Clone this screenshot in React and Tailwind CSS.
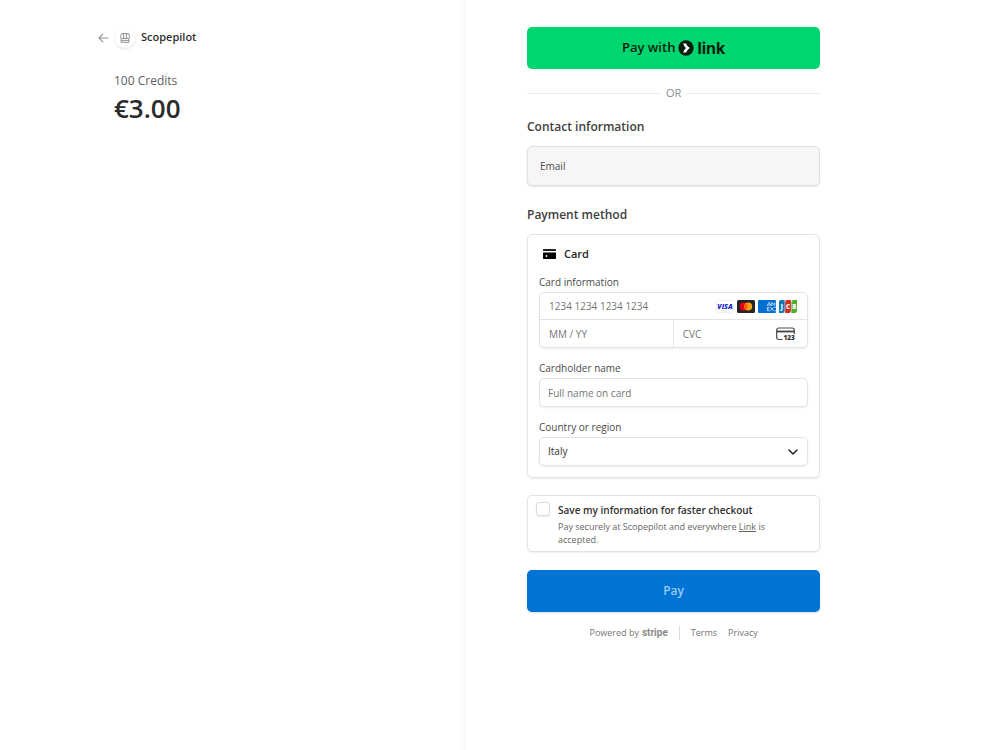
import React from "react";

const field =
  "block h-[29px] w-full rounded-[5px] border border-[#e3e3e3] bg-white px-2 text-[10px] text-[#303030] shadow-[0_1px_2px_rgba(0,0,0,0.07)] outline-none placeholder:text-[#757575]";
const label = "mt-[13px] mb-[3px] block text-[10px] leading-[14px] font-medium text-[#4a4a4a]";

function ArrowLeft() {
  return (
    <svg viewBox="0 0 11 10" className="h-[10px] w-[11px]" fill="none" stroke="#959595" strokeWidth="1.1" strokeLinecap="round" strokeLinejoin="round">
      <path d="M10 5H1.2M4.8 1.2L1 5l3.8 3.8" />
    </svg>
  );
}

function Store() {
  return (
    <svg viewBox="0 0 10 10" className="size-[10px]" fill="none" stroke="#858585" strokeWidth="0.9" strokeLinejoin="round">
      <path d="M1.5 0.6h7l1 3v0.6a1.2 1.2 0 0 1-1.2 1.2H1.7A1.2 1.2 0 0 1 0.5 4.2V3.6z" />
      <path d="M3.6 0.6v4.6M6.4 0.6v4.6M1.1 5.6v3.7h7.8V5.6M1.1 7.4h7.8" />
    </svg>
  );
}

function LinkMark() {
  return (
    <svg viewBox="0 0 16 16" className="size-4">
      <circle cx="8" cy="8" r="7.7" fill="#011e0f" />
      <path d="M5.2 3.4h3c.6 2 2 3.700 4 4.600-2 .9-3.400 2.600-4 4.600h-3c.5-1.900 1.500-3.500 2.900-4.600-1.400-1.100-2.400-2.700-2.900-4.600z" fill="#fff" />
    </svg>
  );
}

function CardIcon() {
  return (
    <svg viewBox="0 0 13 10" className="h-[10px] w-[13px]">
      <path d="M0.7 0h11.6q.7 0 .7.7V2H0V.7Q0 0 .7 0z" fill="#222" />
      <path d="M0 3.5h13v5.7q0 .8-.8.8H.8Q0 10 0 9.2z" fill="#000" />
      <circle cx="3.5" cy="7" r="0.9" fill="#fff" />
    </svg>
  );
}

function Visa() {
  return (
    <svg viewBox="0 0 18 13" className="h-[13px] w-[18px]" role="img" aria-label="Visa">
      <rect x="0.5" y="0.5" width="17" height="12" rx="1" fill="#fff" stroke="#f0f0f0" />
      <text x="9" y="9" textAnchor="middle" fontFamily="Open Sans, sans-serif" fontSize="7" fontWeight="800" fontStyle="italic" fill="#1a2bc8">VISA</text>
    </svg>
  );
}

function Mastercard() {
  return (
    <svg viewBox="0 0 18 13" className="h-[13px] w-[18px]" role="img" aria-label="Mastercard">
      <rect width="18" height="13" rx="1.5" fill="#252525" />
      <circle cx="6.8" cy="6.5" r="4" fill="#eb001b" />
      <circle cx="11.2" cy="6.5" r="4" fill="#f79e1b" />
      <path d="M9 3.16a4 4 0 0 1 0 6.68a4 4 0 0 1 0-6.68z" fill="#ff5f00" />
    </svg>
  );
}

function Amex() {
  return (
    <svg viewBox="0 0 18 13" className="h-[13px] w-[18px]" role="img" aria-label="American Express">
      <rect width="18" height="13" rx="1" fill="#016fd0" />
      <path d="M9.2 6l1.5-3.5h1L13 6M10 4.9h2.4M13.8 6V2.6l1.5 2 1.5-2V6" fill="none" stroke="#d6e9fa" strokeWidth="0.8" />
      <path d="M11.6 7.3H9.4v3.5h2.2M9.4 9h2M12.5 7.2l3.2 3.7M15.7 7.2l-3.2 3.7M16.3 7.3H18M16.3 10.8H18" fill="none" stroke="#d6e9fa" strokeWidth="0.8" />
    </svg>
  );
}

function Jcb() {
  const font = { fontFamily: "Open Sans, sans-serif", fontSize: "6", fontWeight: "800", fill: "#fff", textAnchor: "middle" };
  return (
    <svg viewBox="0 0 18 13" className="h-[13px] w-[18px]" role="img" aria-label="JCB">
      <path d="M2 0h3.7v11q0 2-2 2H0V2q0-2 2-2z" fill="#0f7ab8" />
      <path d="M8.2 0h3.7v11q0 2-2 2H6.2V2q0-2 2-2z" fill="#d9291c" />
      <path d="M14.4 0h3.6v11q0 2-2 2h-3.6V2q0-2 2-2z" fill="#4fae2c" />
      <text x="2.9" y="8.7" {...font}>J</text>
      <text x="9" y="8.7" {...font}>C</text>
      <text x="15.2" y="8.7" {...font}>B</text>
    </svg>
  );
}

function CvcIcon() {
  return (
    <svg viewBox="0 0 19 14" className="h-[14px] w-[19px]">
      <path d="M6.5 12.5H2.6A1.9 1.9 0 0 1 .7 10.6V2.9A1.9 1.9 0 0 1 2.6 1h13.8a1.9 1.9 0 0 1 1.9 1.9v4.3" fill="none" stroke="#4a4a4a" strokeWidth="1.2" />
      <path d="M.7 3.6h17.6v1.8H.7z" fill="#444" />
      <text x="13.2" y="13.3" textAnchor="middle" fontFamily="Open Sans, sans-serif" fontSize="6.5" fontWeight="800" fill="#333">123</text>
    </svg>
  );
}

function Chevron() {
  return (
    <svg viewBox="0 0 10 6" className="pointer-events-none col-start-1 row-start-1 mr-[10px] h-[6px] w-[10px] self-center justify-self-end" fill="none" stroke="#1f1f1f" strokeWidth="1.5" strokeLinecap="round" strokeLinejoin="round">
      <path d="M1 1l4 4 4-4" />
    </svg>
  );
}

function Summary() {
  return (
    <section className="w-[46.6%] shrink-0 bg-gradient-to-l from-[#f8f8f8] to-white to-[7px] pt-[27px] pr-[62px] pl-[98px]">
      <header className="flex h-[21px] items-center">
        <a href="#back" aria-label="Back"><ArrowLeft /></a>
        <span className="ml-1.5 flex size-5 items-center justify-center rounded-full bg-white shadow-[0_1px_3px_rgba(0,0,0,0.12)]">
          <Store />
        </span>
        <span className="ml-1.5 text-[11px] font-semibold text-[#303030]">Scopepilot</span>
      </header>
      <div className="mt-6 pl-4">
        <p className="text-xs leading-[18px] font-medium text-[#5e5e5e]">100 Credits</p>
        <p className="text-[26px] leading-9 font-semibold text-[#2b2b2b]">€3.00</p>
      </div>
    </section>
  );
}

function CardPanel() {
  return (
    <div className="mt-[11px] rounded-[5px] border border-[#e3e3e3] px-[11px] py-[11px] shadow-[0_1px_2px_rgba(0,0,0,0.07)]">
      <div className="flex h-4 items-center gap-2 pl-1">
        <CardIcon />
        <span className="text-[11px] font-semibold text-[#1f1f1f]">Card</span>
      </div>

      <label htmlFor="number" className={label}>Card information</label>
      <div className="rounded-[5px] border border-[#e3e3e3] shadow-[0_1px_2px_rgba(0,0,0,0.07)]">
        <div className="flex h-[27px] items-center border-b border-[#e3e3e3] pr-[10px]">
          <input id="number" placeholder="1234 1234 1234 1234" className="h-full min-w-0 flex-1 bg-transparent pl-[9px] text-[10px] outline-none placeholder:text-[#757575]" />
          <div className="flex gap-[3px]">
            <Visa />
            <Mastercard />
            <Amex />
            <Jcb />
          </div>
        </div>
        <div className="grid h-[27px] grid-cols-2">
          <div className="flex border-r border-[#e3e3e3]">
            <input aria-label="Expiration" placeholder="MM / YY" className="h-full min-w-0 flex-1 bg-transparent pl-[9px] text-[10px] outline-none placeholder:text-[#757575]" />
          </div>
          <div className="flex items-center pr-[12px]">
            <input aria-label="CVC" placeholder="CVC" className="h-full min-w-0 flex-1 bg-transparent pl-[9px] text-[10px] outline-none placeholder:text-[#757575]" />
            <CvcIcon />
          </div>
        </div>
      </div>

      <label htmlFor="holder" className={label}>Cardholder name</label>
      <input id="holder" placeholder="Full name on card" className={field} />

      <label htmlFor="country" className={label}>Country or region</label>
      <div className="grid">
        <select id="country" className={field + " col-start-1 row-start-1 appearance-none"}>
          <option>Italy</option>
        </select>
        <Chevron />
      </div>
    </div>
  );
}

function Checkout() {
  return (
    <main className="flex-1 pt-[27px] pl-[61px]">
      <form className="w-[62%] min-w-[280px]">
        <button type="button" className="flex h-[42px] w-full items-center justify-center gap-[3px] rounded-[5px] bg-[#00d66f] text-[#011e0f]">
          <span className="text-[13px] font-semibold">Pay with</span>
          <LinkMark />
          <span className="font-['Inter',sans-serif] text-base leading-5 font-bold">link</span>
        </button>

        <div className="mt-4 flex h-4 items-center gap-1.5 text-[11px] text-[#8c8c8c]">
          <span className="h-px flex-1 bg-[#ebebeb]" />
          OR
          <span className="h-px flex-1 bg-[#ebebeb]" />
        </div>

        <h2 className="mt-[18px] text-xs leading-4 font-semibold text-[#404040]">Contact information</h2>
        <div className="mt-[11px] flex h-10 items-center rounded-[5px] border border-[#e0e0e0] bg-[#f6f6f6] pl-3 shadow-[0_1px_2px_rgba(0,0,0,0.1)]">
          <label htmlFor="email" className="text-[10px] font-medium text-[#4a4a4a]">Email</label>
          <input id="email" type="email" className="ml-4 h-full min-w-0 flex-1 bg-transparent text-[10px] outline-none" />
        </div>

        <h2 className="mt-[21px] text-xs leading-4 font-semibold text-[#404040]">Payment method</h2>
        <CardPanel />

        <div className="mt-[17px] flex gap-2 rounded-[5px] border border-[#e3e3e3] pt-1.5 pr-8 pb-[5px] pl-2 shadow-[0_1px_2px_rgba(0,0,0,0.07)]">
          <input id="save" type="checkbox" className="size-3.5 shrink-0 appearance-none rounded-[3px] border border-[#dcdcdc] bg-white shadow-[0_1px_2px_rgba(0,0,0,0.08)] checked:bg-[#0074d4]" />
          <div className="min-w-0">
            <label htmlFor="save" className="block text-[10px] leading-4 font-semibold text-[#303030]">Save my information for faster checkout</label>
            <p className="mt-0.5 text-[9px] leading-[13px] text-[#666]">
              Pay securely at Scopepilot and everywhere <a href="#link" className="underline">Link</a> is accepted.
            </p>
          </div>
        </div>

        <button type="submit" className="mt-[18px] block h-[42px] w-full rounded-[5px] bg-[#0074d4] text-xs font-semibold text-[#9ccaf0] shadow-[0_1px_2px_rgba(0,0,0,0.15)]">Pay</button>

        <footer className="mt-3 flex h-[18px] items-center justify-center text-[9px] text-[#757575]">
          <span>Powered by</span>
          <span className="ml-[3px] font-['Roboto',sans-serif] text-[10px] leading-3 font-bold text-[#8a8a8a]">stripe</span>
          <span className="mx-[11px] h-3.5 w-px bg-[#dcdcdc]" />
          <a href="#terms">Terms</a>
          <a href="#privacy" className="ml-[11px]">Privacy</a>
        </footer>
      </form>
    </main>
  );
}

export default function App() {
  return (
    <div className="flex min-h-screen bg-white font-['Open_Sans','Noto_Sans',sans-serif]">
      <Summary />
      <Checkout />
    </div>
  );
}
